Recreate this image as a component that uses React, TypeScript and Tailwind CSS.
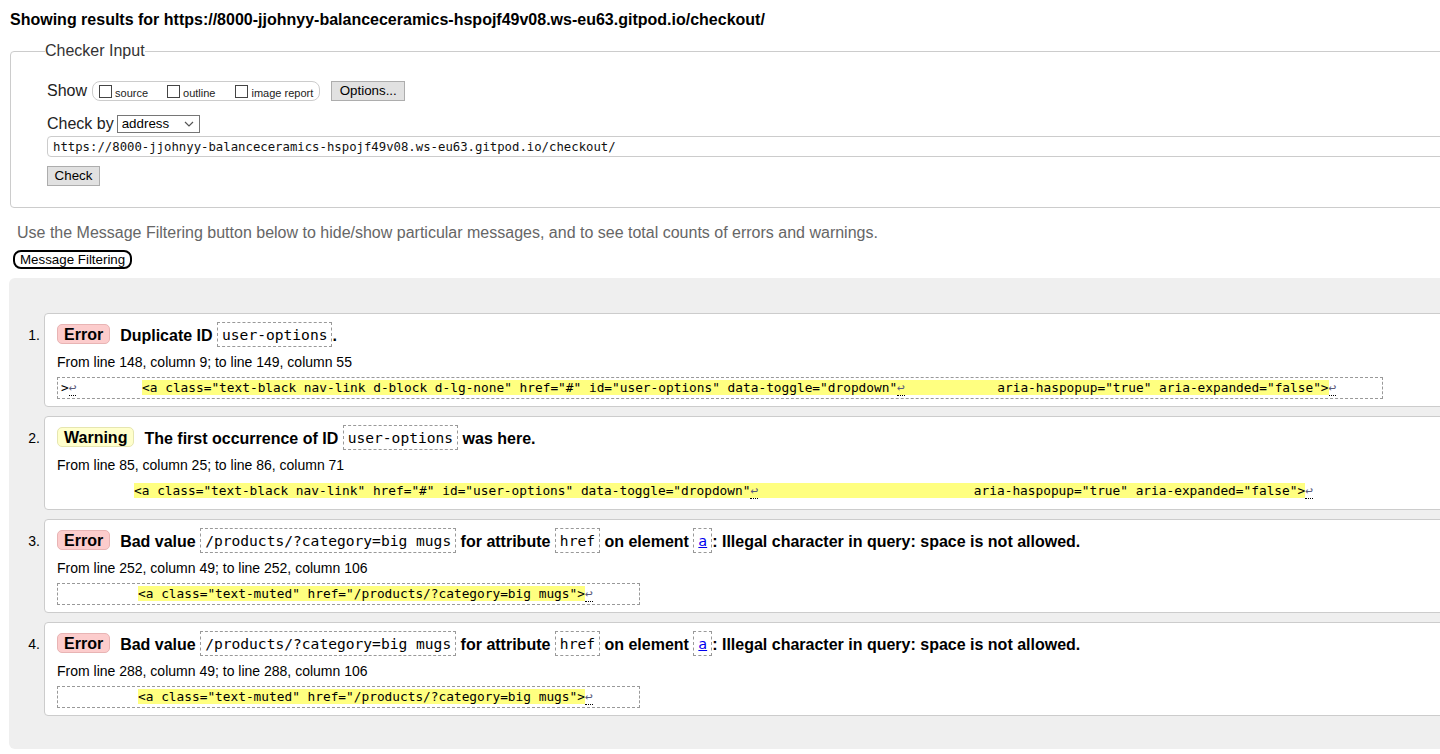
import React from "react";

const URL = "https://8000-jjohnyy-balanceceramics-hspojf49v08.ws-eu63.gitpod.io/checkout/";

function Lf() {
  return <span className="text-[#5a5a7a] border-b border-dotted border-black">↩</span>;
}

function Code({ children }: { children: React.ReactNode }) {
  return (
    <span className="inline-block align-top border border-dashed border-[#999] px-[4px] py-[2px] leading-[19px] font-normal text-[14.6px] font-['DejaVu_Sans_Mono',monospace]">
      {children}
    </span>
  );
}

function Badge({ kind }: { kind: "error" | "warning" }) {
  if (kind === "error") {
    return (
      <span className="inline-block align-top mt-[2px] mr-[10px] h-[20px] leading-[19px] px-[6px] rounded-[5px] border border-[#e8b4b4] bg-[#fccccc]">
        Error
      </span>
    );
  }
  return (
    <span className="inline-block align-top mt-[2px] mr-[10px] h-[20px] leading-[19px] px-[6px] rounded-[5px] border border-[#e6e6b0] bg-[#ffffcc]">
      Warning
    </span>
  );
}

function Mark({ children, shift }: { children: React.ReactNode; shift?: boolean }) {
  return <span className={shift ? "bg-[#ffff80] ml-[4px]" : "bg-[#ffff80]"}>{children}</span>;
}

function Item({
  n,
  title,
  from,
  extract,
  boxed = true,
}: {
  n: number;
  title: React.ReactNode;
  from: string;
  extract: React.ReactNode;
  boxed?: boolean;
}) {
  return (
    <li className="flex">
      <div className="w-[35px] shrink-0 text-right pr-[4px] pt-[10px] text-[14px] leading-[25px]">{n}.</div>
      <div className="flex-1 border border-[#ccc] rounded-[4px] bg-white pl-[12px] pt-[8px] pb-[9px]">
        <div className="h-[25px] leading-[27px] whitespace-nowrap font-bold text-[16px]">{title}</div>
        <div className="mt-[7px] text-[14px] leading-[17px]">{from}</div>
        <div className="mt-[4px] h-[22px]">
          {boxed ? (
            <span className="inline-block border border-dashed border-[#999] pl-[3px] pr-[46px] leading-[20px] whitespace-pre text-[12.8px] font-['DejaVu_Sans_Mono',monospace]">
              {extract}
            </span>
          ) : (
            <span className="inline-block pt-[1px] leading-[20px] whitespace-pre text-[12.8px] font-['DejaVu_Sans_Mono',monospace]">
              {extract}
            </span>
          )}
        </div>
      </div>
    </li>
  );
}

export default function App() {
  return (
    <div className="w-[1440px] h-[754px] overflow-hidden bg-white text-black font-['Liberation_Sans',Arial,sans-serif]">
      <div className="w-[1560px]">
        <h2 className="pt-[11px] pl-[10px] text-[16px] leading-[18px] font-bold">Showing results for {URL}</h2>

        <fieldset className="mt-[13px] ml-[10px] border border-[#ccc] rounded-[4px] pl-[36px] pt-[21px] pb-[21px]">
          <legend className="-ml-[2px] text-[16px] leading-[18px] text-[#333]">Checker Input</legend>

          <div className="flex items-center h-[20px] text-[#222]">
            <span className="text-[16px] leading-[18px]">Show</span>
            <div className="ml-[5px] flex items-center h-[20px] border border-[#ccc] rounded-[8px] pl-[6px] pr-[6px]">
              <label className="flex items-center">
                <span className="w-[13px] h-[13px] border border-[#444] bg-white mr-[3px]" />
                <span className="text-[11px] leading-[13px] pt-[4px]">source</span>
              </label>
              <label className="flex items-center ml-[19px]">
                <span className="w-[13px] h-[13px] border border-[#444] bg-white mr-[3px]" />
                <span className="text-[11px] leading-[13px] pt-[4px]">outline</span>
              </label>
              <label className="flex items-center ml-[20px]">
                <span className="w-[13px] h-[13px] border border-[#444] bg-white mr-[3px]" />
                <span className="text-[11px] leading-[13px] pt-[4px]">image report</span>
              </label>
            </div>
            <button className="ml-[11px] w-[74px] h-[20px] border border-[#adadad] bg-[#e1e1e1] text-[13.33px] leading-[18px] text-black">
              Options...
            </button>
          </div>

          <div className="mt-[14px] flex items-center h-[18px] text-[#222]">
            <span className="text-[16px] leading-[18px]">Check by</span>
            <div className="ml-[3px] w-[83px] h-[18px] border border-[#767676] bg-white flex items-center justify-between pl-[4px] pr-[5px] text-[13.33px] leading-[16px] text-black">
              <span>address</span>
              <svg width="10" height="6" viewBox="0 0 10 6" fill="none">
                <path d="M1 1L5 5L9 1" stroke="#555" strokeWidth="1.2" />
              </svg>
            </div>
          </div>

          <div className="mt-[3px] h-[21px] border border-[#ccc] rounded-[4px] pl-[5px] pt-[2px] flex items-center text-[12.3px] font-['DejaVu_Sans_Mono',monospace] text-[#111]">
            {URL}
          </div>

          <button className="mt-[9px] block w-[53px] h-[20px] border border-[#adadad] bg-[#e1e1e1] text-[13.33px] leading-[18px] text-black">
            Check
          </button>
        </fieldset>

        <p className="mt-[16px] ml-[17px] text-[16px] leading-[18px] text-[#666]">
          Use the Message Filtering button below to hide/show particular messages, and to see total counts of errors and warnings.
        </p>

        <button className="mt-[8px] ml-[13px] block h-[19px] px-[5px] border-2 border-black rounded-[8px] text-[13.33px] leading-[15px] bg-white">
          Message Filtering
        </button>

        <div className="mt-[9px] ml-[9px] bg-[#efefef] rounded-l-[6px] pt-[35px] pb-[33px]">
          <ol className="flex flex-col gap-[9px]">
            <Item
              n={1}
              title={
                <>
                  <Badge kind="error" />
                  Duplicate ID <Code>user-options</Code>.
                </>
              }
              from="From line 148, column 9; to line 149, column 55"
              extract={
                <>
                  {">"}
                  <Lf />
                  {"        "}
                  <Mark shift>
                    {'<a class="text-black nav-link d-block d-lg-none" href="#" id="user-options" data-toggle="dropdown"'}
                    <Lf />
                    {"            "}
                    {'aria-haspopup="true" aria-expanded="false">'}
                  </Mark>
                  <Lf />
                </>
              }
            />
            <Item
              n={2}
              boxed={false}
              title={
                <>
                  <Badge kind="warning" />
                  The first occurrence of ID <Code>user-options</Code> was here.
                </>
              }
              from="From line 85, column 25; to line 86, column 71"
              extract={
                <>
                  {"          "}
                  <Mark>
                    {'<a class="text-black nav-link" href="#" id="user-options" data-toggle="dropdown"'}
                    <Lf />
                    {"                            "}
                    {'aria-haspopup="true" aria-expanded="false">'}
                  </Mark>
                  <Lf />
                </>
              }
            />
            {[3, 4].map((n) => (
              <Item
                key={n}
                n={n}
                title={
                  <>
                    <Badge kind="error" />
                    Bad value <Code>/products/?category=big mugs</Code> for attribute <Code>href</Code> on element{" "}
                    <Code>
                      <span className="text-[#00e] underline">a</span>
                    </Code>
                    : Illegal character in query: space is not allowed.
                  </>
                }
                from={n === 3 ? "From line 252, column 49; to line 252, column 106" : "From line 288, column 49; to line 288, column 106"}
                extract={
                  <>
                    {"          "}
                    <Mark>{'<a class="text-muted" href="/products/?category=big mugs">'}</Mark>
                    <Lf />
                  </>
                }
              />
            ))}
          </ol>
        </div>
      </div>
    </div>
  );
}
